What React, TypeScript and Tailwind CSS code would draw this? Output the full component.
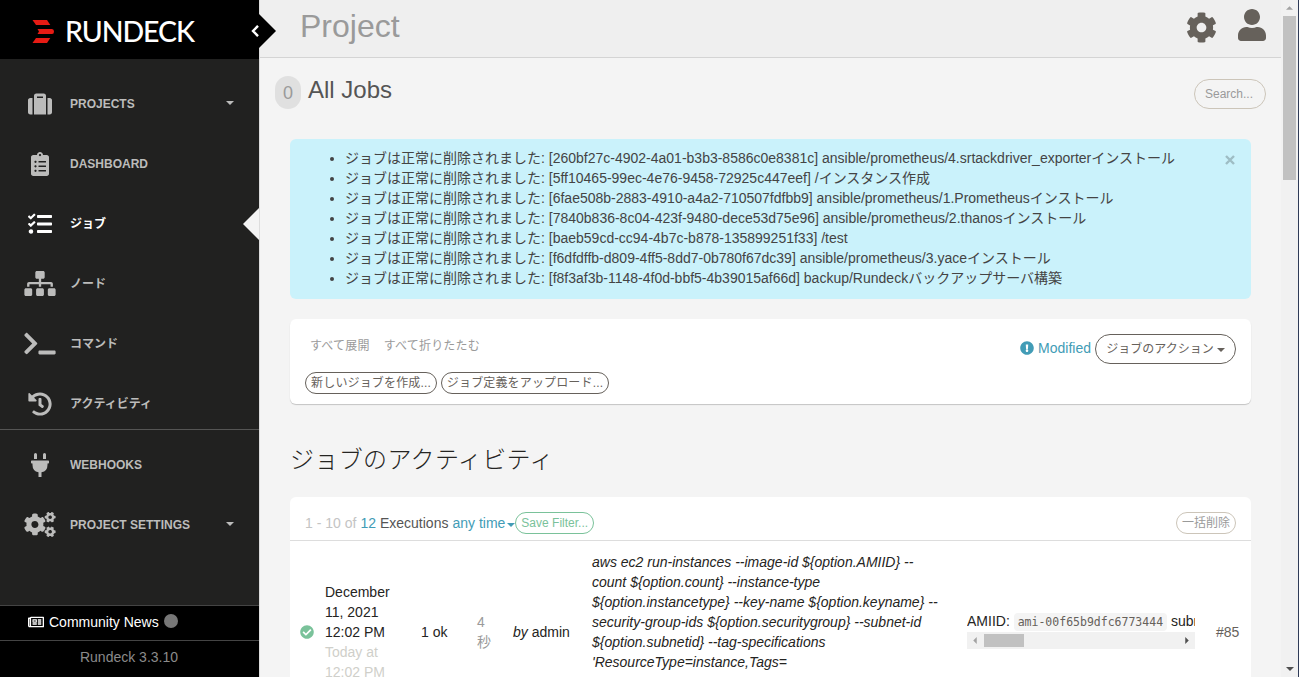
import React from 'react';
import type { IconType } from 'react-icons';
import {
  FaCheckCircle,
  FaClipboardList,
  FaCog,
  FaCogs,
  FaExclamationCircle,
  FaHistory,
  FaPlug,
  FaRegNewspaper,
  FaSitemap,
  FaSuitcase,
  FaTasks,
  FaTerminal,
  FaUser,
} from 'react-icons/fa';

interface NavItem {
  label: string;
  icon: IconType;
  wide?: boolean;
  active?: boolean;
  caret?: boolean;
}

const projectNav: NavItem[] = [
  { label: 'PROJECTS', icon: FaSuitcase, caret: true },
  { label: 'DASHBOARD', icon: FaClipboardList },
  { label: 'ジョブ', icon: FaTasks, active: true },
  { label: 'ノード', icon: FaSitemap, wide: true },
  { label: 'コマンド', icon: FaTerminal, wide: true },
  { label: 'アクティビティ', icon: FaHistory },
];

const settingsNav: NavItem[] = [
  { label: 'WEBHOOKS', icon: FaPlug },
  { label: 'PROJECT SETTINGS', icon: FaCogs, wide: true, caret: true },
];

const deletedJobs = [
  '[260bf27c-4902-4a01-b3b3-8586c0e8381c] ansible/prometheus/4.srtackdriver_exporterインストール',
  '[5ff10465-99ec-4e76-9458-72925c447eef] /インスタンス作成',
  '[6fae508b-2883-4910-a4a2-710507fdfbb9] ansible/prometheus/1.Prometheusインストール',
  '[7840b836-8c04-423f-9480-dece53d75e96] ansible/prometheus/2.thanosインストール',
  '[baeb59cd-cc94-4b7c-b878-135899251f33] /test',
  '[f6dfdffb-d809-4ff5-8dd7-0b780f67dc39] ansible/prometheus/3.yaceインストール',
  '[f8f3af3b-1148-4f0d-bbf5-4b39015af66d] backup/Rundeckバックアップサーバ構築',
];

const commandLines = [
  'aws ec2 run-instances --image-id ${option.AMIID} --',
  'count ${option.count} --instance-type',
  '${option.instancetype} --key-name ${option.keyname} --',
  'security-group-ids ${option.securitygroup} --subnet-id',
  '${option.subnetid} --tag-specifications',
  "'ResourceType=instance,Tags=",
];

const Caret: React.FC<{ className?: string }> = ({ className = '' }) => (
  <svg viewBox="0 0 8 4" className={`h-1 w-2 shrink-0 fill-current ${className}`}>
    <path d="M0 0h8L4 4z" />
  </svg>
);

const NavRow: React.FC<{ item: NavItem }> = ({ item }) => {
  const Icon = item.icon;
  return (
    <li
      className={`relative flex h-[60px] items-center text-[12px] font-bold ${
        item.active ? 'text-white' : 'text-[#bcbcbb]'
      }`}
    >
      <span className="ml-5 flex w-10 shrink-0 justify-center pt-px">
        <Icon className={item.wide ? 'h-[25px] w-8' : 'h-6 w-[26px]'} />
      </span>
      <span className="ml-2.5 flex-1 pt-0.5 leading-5">{item.label}</span>
      {item.caret && <Caret className="mr-[25px]" />}
      {item.active && (
        <svg viewBox="0 0 16 32" className="absolute top-[15px] right-0 h-8 w-4 fill-[#f4f4f4]">
          <path d="M16 0v32L0 16z" />
        </svg>
      )}
    </li>
  );
};

const Sidebar: React.FC = () => (
  <aside className="relative z-10 flex w-[259px] shrink-0 flex-col bg-[#212120]">
    <div className="flex h-[59px] shrink-0 items-center bg-black pl-8">
      <svg viewBox="0 0 22 23" className="mt-1 h-[23px] w-[22px] fill-[#e71b14]">
        <path d="M.5 0H15l3.300 5H4z" />
        <path d="M5.500 9H20q2 0 2 2.500T20 14H5.500L7 11.500z" />
        <path d="M4 18h14.300L15 23H.500z" />
      </svg>
      <svg viewBox="0 0 136 36" className="mt-0.5 ml-[11px] h-9 w-[136px]">
        <text
          x="0"
          y="28.5"
          textLength="130"
          lengthAdjust="spacing"
          className="fill-white font-['Lato'] text-[28.5px] font-medium"
        >
          RUNDECK
        </text>
      </svg>
      <svg viewBox="0 0 17 34" className="absolute top-[14px] left-[259px] h-[34px] w-[17px] fill-black">
        <path d="M0 0v34l17-17z" />
      </svg>
      <svg viewBox="0 0 8 12" className="absolute top-[25px] left-[251px] h-3 w-2 fill-none stroke-white stroke-[2.400]">
        <path d="M7 .8 2 6l5 5.200" />
      </svg>
    </div>

    <ul className="mt-[14px] h-[357px] border-b border-[#555554]">
      {projectNav.map((item) => (
        <NavRow key={item.label} item={item} />
      ))}
    </ul>
    <ul className="mt-1">
      {settingsNav.map((item) => (
        <NavRow key={item.label} item={item} />
      ))}
    </ul>

    {/* Footer */}
    <div className="mt-auto h-[72px] bg-black">
      <div className="flex h-[35px] items-center border-t border-[#444] pb-0.5 pl-7 text-white">
        <FaRegNewspaper size={16} />
        <span className="ml-[5px]">Community News</span>
        <span className="mb-[3px] ml-[5px] h-3.5 w-3.5 rounded-full bg-[#777]" />
      </div>
      <div className="border-t border-[#444] pt-1.5 pr-px text-center text-[#8b8b8b]">Rundeck 3.3.10</div>
    </div>
  </aside>
);

const Header: React.FC = () => (
  <header className="flex h-[58px] items-start border-b border-[#d4d4d4] bg-[#efefef] pr-[15px] pl-10">
    <h1 className="mt-1.5 text-[32px] leading-10 text-[#9a9a9a]">Project</h1>
    <FaCog size={31} className="mt-3 ml-auto text-[#66615b]" />
    <FaUser size={32} className="mt-[9px] ml-[21px] w-[28px] text-[#66615b]" />
  </header>
);

const Flash: React.FC = () => (
  <div className="relative mt-[30px] h-[160px] rounded-md bg-[#caf2fb] pt-[9px] pl-[55px] text-[#444]">
    <ul className="list-disc">
      {deletedJobs.map((job) => (
        <li key={job} className="leading-5 whitespace-nowrap">
          ジョブは正常に削除されました: {job}
        </li>
      ))}
    </ul>
    <svg
      viewBox="0 0 10 10"
      className="absolute top-4 right-4 h-2.5 w-2.5 stroke-[#9ebdc4] stroke-[2.4]"
    >
      <path d="M1 1l8 8M9 1l-8 8" />
    </svg>
  </div>
);

const JobList: React.FC = () => (
  <div className="mt-5 flex h-[85px] justify-between rounded-md bg-white px-[15px] shadow-[0_1px_1px_rgba(0,0,0,0.2)]">
    <div>
      <div className="mt-[17px] ml-[5px] flex gap-[14px] text-[12px] leading-5 tracking-[0.2px] text-[#9a9a9a]">
        <span>すべて展開</span>
        <span>すべて折りたたむ</span>
      </div>
      <div className="mt-4 flex gap-1 text-[12px] tracking-[0.15px] text-[#66615b]">
        <button className="h-[22px] w-[132px] rounded-full border border-[#66615b] leading-5">
          新しいジョブを作成...
        </button>
        <button className="h-[22px] w-[168px] rounded-full border border-[#66615b] leading-5">
          ジョブ定義をアップロード...
        </button>
      </div>
    </div>
    <div className="mt-[15px] flex h-[30px] items-center text-[#429cb6]">
      <FaExclamationCircle size={14} className="mb-[3px]" />
      <span className="ml-1 pb-0.5">Modified</span>
      <button className="ml-1 flex h-[30px] w-[141px] items-center justify-center gap-[3px] rounded-full border border-[#66615b] text-[12px] text-[#66615b]">
        ジョブのアクション
        <Caret className="mt-0.5" />
      </button>
    </div>
  </div>
);

const Activity: React.FC = () => (
  <div className="mt-[19px] h-[320px] rounded-md bg-white">
    <div className="flex h-11 items-center border-b border-[#ddd] px-[15px] pt-2">
      <span className="text-[#c4c4c4]">1 - 10 of</span>
      <span className="ml-1 text-[#429cb6]">12</span>
      <span className="ml-1 text-[#555]">Executions</span>
      <span className="ml-1 text-[#429cb6]">any time</span>
      <Caret className="mt-1 ml-0.5 text-[#429cb6]" />
      <button className="h-[22px] rounded-full border border-[#7ac29a] px-[5px] text-[12px] leading-5 text-[#7ac29a]">
        Save Filter...
      </button>
      <button className="ml-auto h-[22px] rounded-full border border-[#ccc5b9] px-[5px] text-[12px] leading-5 text-[#9a9a9a]">
        一括削除
      </button>
    </div>

    <div className="flex h-[182px] items-center text-[#252422]">
      <div className="w-[35px] shrink-0 pl-2.5">
        <FaCheckCircle size={14} className="text-[#7ac29a]" />
      </div>
      <div className="w-24 shrink-0 leading-5">
        December
        <br />
        11, 2021
        <br />
        12:02 PM
        <div className="text-[#cfcfca]">
          Today at
          <br />
          12:02 PM
        </div>
      </div>
      <div className="w-14 shrink-0">1 ok</div>
      <div className="w-9 shrink-0 leading-5 text-[#9a9a9a]">
        4<br />秒
      </div>
      <div className="w-[79px] shrink-0">
        <em>by</em> admin
      </div>
      <div className="h-[160px] w-[375px] shrink-0 leading-5 italic">
        {commandLines.map((line) => (
          <div key={line} className="whitespace-nowrap">
            {line}
          </div>
        ))}
      </div>
      <div className="w-[228px] shrink-0 pb-[5px]">
        <div className="overflow-hidden leading-5 whitespace-nowrap">
          AMIID:{' '}
          <code className="rounded bg-[#f4f4f4] px-1 py-0.5 font-['DejaVu_Sans_Mono'] text-[11.5px] text-[#66615b]">
            ami-00f65b9dfc6773444
          </code>{' '}
          subn
        </div>
        <div className="flex h-[17px] items-center bg-[#f1f1f1]">
          <svg viewBox="0 0 4 8" className="ml-1.5 h-[7px] w-1 fill-[#a3a3a3]">
            <path d="M4 0v8L0 4z" />
          </svg>
          <span className="ml-[7px] h-[13px] w-10 bg-[#c1c1c1]" />
          <svg viewBox="0 0 4 8" className="mr-1.5 ml-auto h-[7px] w-1 fill-[#505050]">
            <path d="M0 0v8l4-4z" />
          </svg>
        </div>
      </div>
      <div className="ml-[21px] text-[#66615b]">#85</div>
    </div>
  </div>
);

const PageScrollbar: React.FC = () => (
  <div className="flex w-[18px] shrink-0 flex-col items-center border-r border-[#2f3b57] bg-[#f1f1f1]">
    <svg viewBox="0 0 8 4" className="mt-1.5 h-1 w-[7px] fill-[#a3a3a3]">
      <path d="M0 4h8L4 0z" />
    </svg>
    <span className="mt-1.5 h-[164px] w-[13px] bg-[#c1c1c1]" />
    <Caret className="mt-auto mb-1.5 text-[#505050]" />
  </div>
);

const App: React.FC = () => (
  <div className="flex h-[677px] w-[1299px] overflow-hidden bg-[#f4f4f4] font-['Liberation_Sans','Noto_Sans_CJK_JP',sans-serif] text-[14px] leading-5">
    <Sidebar />
    <main className="h-full flex-1 overflow-hidden border-l border-[#ddd]">
      <Header />
      <div className="flex h-[51px] items-start justify-between px-[15px] pt-[18px]">
        <div className="flex items-center">
          <span className="flex h-[33px] w-[26px] items-center justify-center rounded-full bg-[#e0e0e0] text-[18px] text-[#9a9a9a]">
            0
          </span>
          <span className="mb-1.5 ml-[7px] text-[24px] leading-[25px] text-[#555]">All Jobs</span>
        </div>
        <div className="mt-[3px] h-[30px] w-[72px] rounded-full border border-[#ccc5b9] pl-2.5 text-[12px] leading-7 text-[#9a9a9a]">
          Search...
        </div>
      </div>
      <div className="px-[30px]">
        <Flash />
        <JobList />
        <h2 className="mt-[38px] text-[24px] leading-9 font-light tracking-[0.35px] text-[#252422]">
          ジョブのアクティビティ
        </h2>
        <Activity />
      </div>
    </main>
    <PageScrollbar />
  </div>
);

export default App;
